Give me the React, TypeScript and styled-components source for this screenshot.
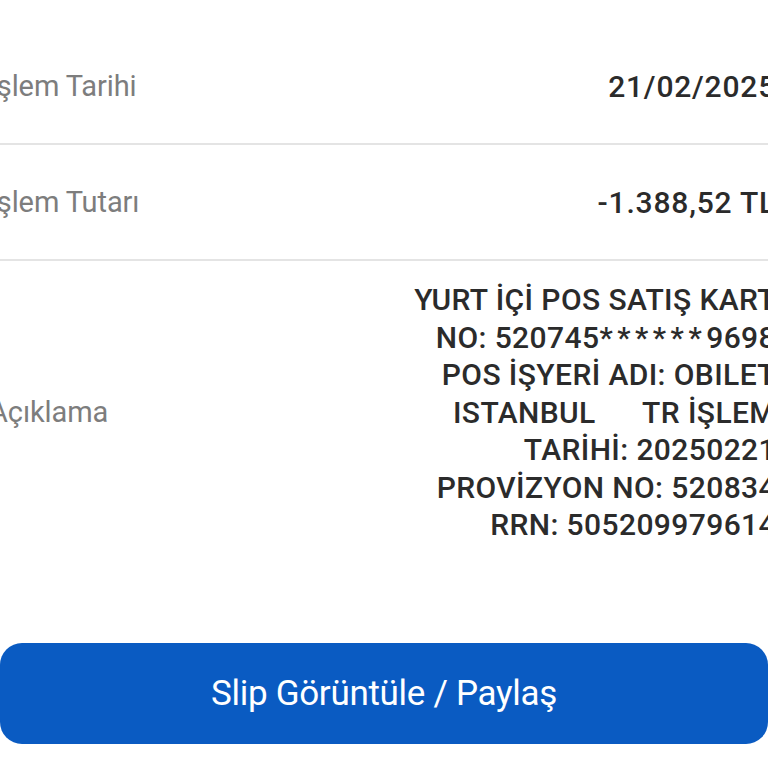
import React from "react";
import styled, { createGlobalStyle } from "styled-components";

const Global = createGlobalStyle`
  html, body { margin: 0; padding: 0; background: #ffffff; }
  body { overflow: hidden; font-family: Roboto, "Noto Sans", sans-serif; }
  #root { width: 768px; height: 768px; overflow: hidden; }
`;

const Page = styled.div`
  width: 768px;
  height: 768px;
  overflow: hidden;
  background: #ffffff;
  padding-top: 29px;
  box-sizing: border-box;
`;

const List = styled.div`
  margin: 0 -8px 0 -11px;
  display: flex;
  flex-direction: column;
`;

const Row = styled.div<{ $tall?: boolean }>`
  display: flex;
  align-items: center;
  justify-content: space-between;
  box-sizing: border-box;
  min-height: ${(p) => (p.$tall ? "auto" : "116px")};
  padding: ${(p) => (p.$tall ? "20px 0" : "0")};
  border-bottom: ${(p) => (p.$tall ? "none" : "2px solid #e4e4e4")};
`;

const Label = styled.span`
  font-size: 29px;
  color: #7d7d7d;
  letter-spacing: -0.1px;
`;

const Value = styled.span`
  font-size: 30px;
  color: #2b2b2b;
  font-weight: 500;
  letter-spacing: 0.8px;
`;

const Desc = styled.div`
  display: flex;
  flex-direction: column;
  align-items: flex-end;
  font-size: 30px;
  line-height: 37.5px;
  color: #2b2b2b;
  font-weight: 500;
  letter-spacing: 0.4px;
  text-align: right;
`;

const DescLine = styled.span`
  white-space: pre;
`;

const Stars = styled.span`
  letter-spacing: 4.5px;
`;

const ButtonWrap = styled.div`
  margin-top: 79px;
`;

const Button = styled.button`
  display: flex;
  align-items: center;
  justify-content: center;
  width: 768px;
  height: 101px;
  border: none;
  border-radius: 22px;
  background: #0a5bc2;
  color: #ffffff;
  font-family: Roboto, "Noto Sans", sans-serif;
  font-size: 35px;
  letter-spacing: -0.3px;
  padding: 0;
`;

export default function App() {
  return (
    <>
      <Global />
      <Page>
        <List>
          <Row>
            <Label>İşlem Tarihi</Label>
            <Value>21/02/2025</Value>
          </Row>
          <Row>
            <Label>İşlem Tutarı</Label>
            <Value>-1.388,52 TL</Value>
          </Row>
          <Row $tall>
            <Label>Açıklama</Label>
            <Desc>
              <DescLine>YURT İÇİ POS SATIŞ KART</DescLine>
              <DescLine>
                NO: 520745<Stars>******</Stars>9698
              </DescLine>
              <DescLine>POS İŞYERİ ADI: OBILET</DescLine>
              <DescLine>{"ISTANBUL      TR İŞLEM"}</DescLine>
              <DescLine>TARİHİ: 20250221</DescLine>
              <DescLine>PROVİZYON NO: 520834</DescLine>
              <DescLine>RRN: 505209979614</DescLine>
            </Desc>
          </Row>
        </List>
        <ButtonWrap>
          <Button>Slip Görüntüle / Paylaş</Button>
        </ButtonWrap>
      </Page>
    </>
  );
}
